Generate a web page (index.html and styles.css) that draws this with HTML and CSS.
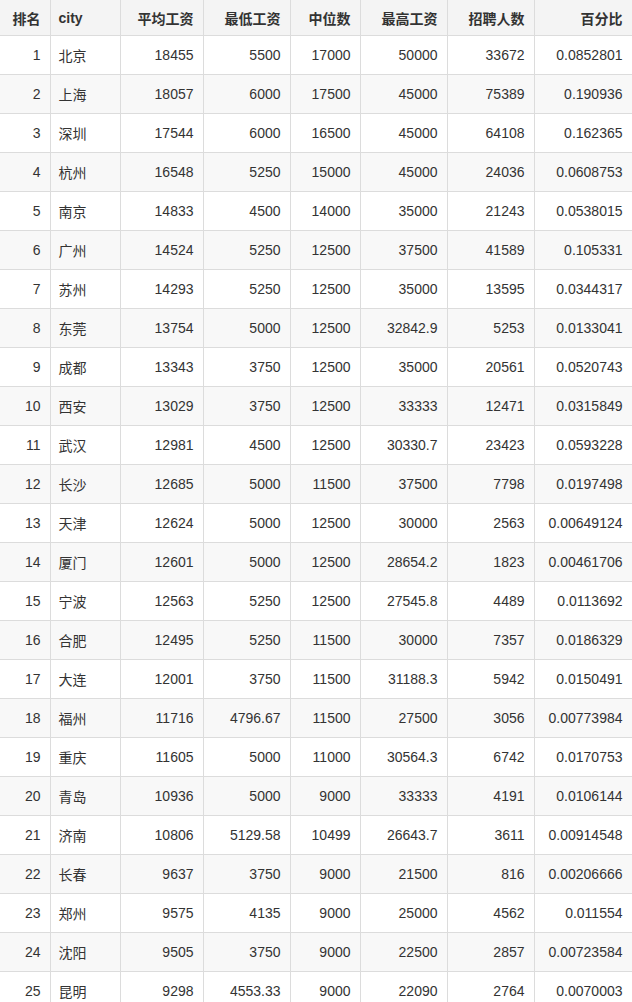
FILE: index.html
```html
<!DOCTYPE html>
<html lang="zh">
<head>
<meta charset="utf-8">
<title>城市工资</title>
<link rel="stylesheet" href="styles.css">
</head>
<body>
<table class="data">
<colgroup>
<col class="c-rank"><col class="c-city"><col class="c-avg"><col class="c-min"><col class="c-mid"><col class="c-max"><col class="c-num"><col class="c-pct">
</colgroup>
<thead>
<tr><th>排名</th><th class="left">city</th><th>平均工资</th><th>最低工资</th><th>中位数</th><th>最高工资</th><th>招聘人数</th><th>百分比</th></tr>
</thead>
<tbody>
<tr><td>1</td><td class="left">北京</td><td>18455</td><td>5500</td><td>17000</td><td>50000</td><td>33672</td><td>0.0852801</td></tr>
<tr><td>2</td><td class="left">上海</td><td>18057</td><td>6000</td><td>17500</td><td>45000</td><td>75389</td><td>0.190936</td></tr>
<tr><td>3</td><td class="left">深圳</td><td>17544</td><td>6000</td><td>16500</td><td>45000</td><td>64108</td><td>0.162365</td></tr>
<tr><td>4</td><td class="left">杭州</td><td>16548</td><td>5250</td><td>15000</td><td>45000</td><td>24036</td><td>0.0608753</td></tr>
<tr><td>5</td><td class="left">南京</td><td>14833</td><td>4500</td><td>14000</td><td>35000</td><td>21243</td><td>0.0538015</td></tr>
<tr><td>6</td><td class="left">广州</td><td>14524</td><td>5250</td><td>12500</td><td>37500</td><td>41589</td><td>0.105331</td></tr>
<tr><td>7</td><td class="left">苏州</td><td>14293</td><td>5250</td><td>12500</td><td>35000</td><td>13595</td><td>0.0344317</td></tr>
<tr><td>8</td><td class="left">东莞</td><td>13754</td><td>5000</td><td>12500</td><td>32842.9</td><td>5253</td><td>0.0133041</td></tr>
<tr><td>9</td><td class="left">成都</td><td>13343</td><td>3750</td><td>12500</td><td>35000</td><td>20561</td><td>0.0520743</td></tr>
<tr><td>10</td><td class="left">西安</td><td>13029</td><td>3750</td><td>12500</td><td>33333</td><td>12471</td><td>0.0315849</td></tr>
<tr><td>11</td><td class="left">武汉</td><td>12981</td><td>4500</td><td>12500</td><td>30330.7</td><td>23423</td><td>0.0593228</td></tr>
<tr><td>12</td><td class="left">长沙</td><td>12685</td><td>5000</td><td>11500</td><td>37500</td><td>7798</td><td>0.0197498</td></tr>
<tr><td>13</td><td class="left">天津</td><td>12624</td><td>5000</td><td>12500</td><td>30000</td><td>2563</td><td>0.00649124</td></tr>
<tr><td>14</td><td class="left">厦门</td><td>12601</td><td>5000</td><td>12500</td><td>28654.2</td><td>1823</td><td>0.00461706</td></tr>
<tr><td>15</td><td class="left">宁波</td><td>12563</td><td>5250</td><td>12500</td><td>27545.8</td><td>4489</td><td>0.0113692</td></tr>
<tr><td>16</td><td class="left">合肥</td><td>12495</td><td>5250</td><td>11500</td><td>30000</td><td>7357</td><td>0.0186329</td></tr>
<tr><td>17</td><td class="left">大连</td><td>12001</td><td>3750</td><td>11500</td><td>31188.3</td><td>5942</td><td>0.0150491</td></tr>
<tr><td>18</td><td class="left">福州</td><td>11716</td><td>4796.67</td><td>11500</td><td>27500</td><td>3056</td><td>0.00773984</td></tr>
<tr><td>19</td><td class="left">重庆</td><td>11605</td><td>5000</td><td>11000</td><td>30564.3</td><td>6742</td><td>0.0170753</td></tr>
<tr><td>20</td><td class="left">青岛</td><td>10936</td><td>5000</td><td>9000</td><td>33333</td><td>4191</td><td>0.0106144</td></tr>
<tr><td>21</td><td class="left">济南</td><td>10806</td><td>5129.58</td><td>10499</td><td>26643.7</td><td>3611</td><td>0.00914548</td></tr>
<tr><td>22</td><td class="left">长春</td><td>9637</td><td>3750</td><td>9000</td><td>21500</td><td>816</td><td>0.00206666</td></tr>
<tr><td>23</td><td class="left">郑州</td><td>9575</td><td>4135</td><td>9000</td><td>25000</td><td>4562</td><td>0.011554</td></tr>
<tr><td>24</td><td class="left">沈阳</td><td>9505</td><td>3750</td><td>9000</td><td>22500</td><td>2857</td><td>0.00723584</td></tr>
<tr><td>25</td><td class="left">昆明</td><td>9298</td><td>4553.33</td><td>9000</td><td>22090</td><td>2764</td><td>0.0070003</td></tr>
</tbody>
</table>
</body>
</html>
```

FILE: styles.css
```css
html, body {
  margin: 0;
  padding: 0;
  background: #ffffff;
}

body {
  font-family: "Liberation Sans", "Noto Sans CJK SC", Arial, sans-serif;
  font-size: 14px;
  color: #333333;
  overflow: hidden;
}

.data {
  width: 632px;
  border-collapse: collapse;
  table-layout: fixed;
}

.c-rank { width: 50px; }
.c-city { width: 70px; }
.c-avg { width: 83px; }
.c-min { width: 87px; }
.c-mid { width: 70px; }
.c-max { width: 87px; }
.c-num { width: 87px; }
.c-pct { width: 98px; }

.data th,
.data td {
  text-align: right;
  padding: 0 9px 0 8px;
  border: 1px solid #dcdcdc;
  white-space: nowrap;
  overflow: hidden;
}

.data th:first-child,
.data td:first-child {
  border-left: none;
}

.data th {
  height: 35px;
  font-weight: bold;
  color: #333333;
  background: #f4f4f4;
  border-top: none;
}

.data td {
  height: 38px;
  color: #333333;
}

.data tbody tr:nth-child(even) td {
  background: #f8f8f8;
}

.data .left {
  text-align: left;
}
```
